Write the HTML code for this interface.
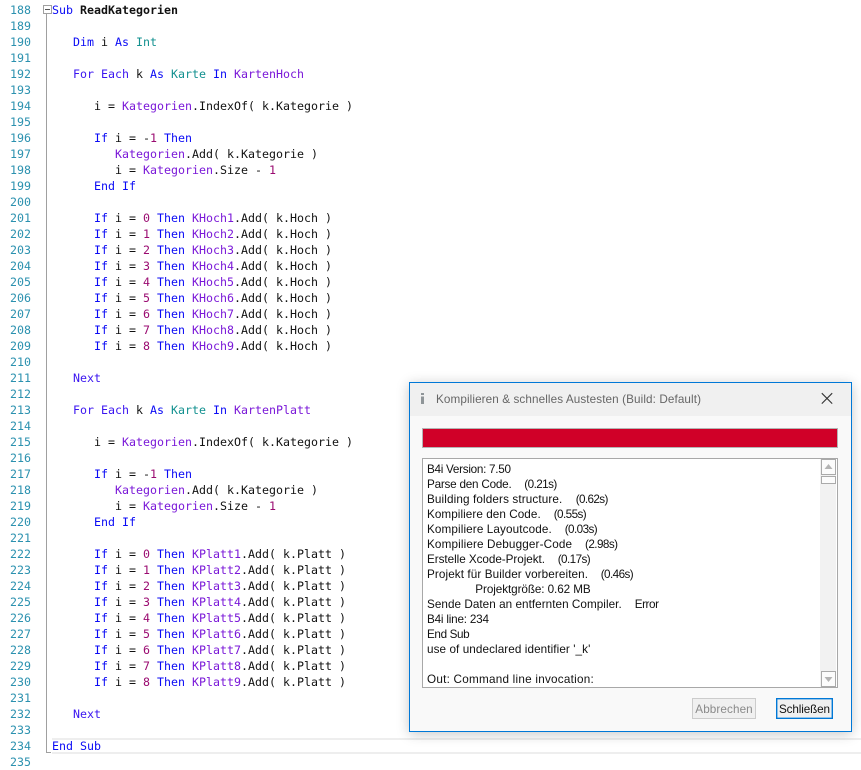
<!DOCTYPE html>
<html><head><meta charset="utf-8"><style>
html,body{margin:0;padding:0;background:#fff}
#p{position:relative;width:861px;height:770px;overflow:hidden;background:#fff}
pre{margin:0;position:absolute;font-family:"DejaVu Sans Mono","Liberation Mono",monospace;font-size:11.63px;line-height:16px}
#n{left:0;top:2px;width:31px;text-align:right;color:#2b91af}
#c{left:52px;top:2px;color:#111}
.k{color:#0a0af5}.f{color:#3a14f0}.t{color:#12908f}.v{color:#7a18d8}.d{color:#9a0a70}
.a{position:absolute}
svg text{font-family:"Liberation Sans",sans-serif;font-size:11.7px;fill:#111}
</style></head><body><div id="p">
<div class="a" style="left:52px;top:738px;width:809px;height:12px;border-top:2px solid #eee;border-bottom:2px solid #eee"></div>
<div class="a" style="left:46px;top:13px;width:1px;height:739px;background:#a0a0a0"></div>
<div class="a" style="left:46px;top:752px;width:5px;height:1px;background:#a0a0a0"></div>
<div class="a" style="left:43px;top:5px;width:7px;height:7px;border:1px solid #a0a0a0;background:#fff"></div>
<div class="a" style="left:45px;top:9px;width:5px;height:1px;background:#555"></div>
<pre id="n">188
189
190
191
192
193
194
195
196
197
198
199
200
201
202
203
204
205
206
207
208
209
210
211
212
213
214
215
216
217
218
219
220
221
222
223
224
225
226
227
228
229
230
231
232
233
234
235</pre>
<pre id="c"><span class="k">Sub</span> <b>ReadKategorien</b>

   <span class="k">Dim</span> i <span class="k">As</span> <span class="t">Int</span>

   <span class="f">For Each</span> k <span class="k">As</span> <span class="t">Karte</span> <span class="k">In</span> <span class="v">KartenHoch</span>

      i = <span class="v">Kategorien</span>.IndexOf( k.Kategorie )

      <span class="k">If</span> i = -<span class="d">1</span> <span class="k">Then</span>
         <span class="v">Kategorien</span>.Add( k.Kategorie )
         i = <span class="v">Kategorien</span>.Size - <span class="d">1</span>
      <span class="k">End If</span>

      <span class="k">If</span> i = <span class="d">0</span> <span class="k">Then</span> <span class="v">KHoch1</span>.Add( k.Hoch )
      <span class="k">If</span> i = <span class="d">1</span> <span class="k">Then</span> <span class="v">KHoch2</span>.Add( k.Hoch )
      <span class="k">If</span> i = <span class="d">2</span> <span class="k">Then</span> <span class="v">KHoch3</span>.Add( k.Hoch )
      <span class="k">If</span> i = <span class="d">3</span> <span class="k">Then</span> <span class="v">KHoch4</span>.Add( k.Hoch )
      <span class="k">If</span> i = <span class="d">4</span> <span class="k">Then</span> <span class="v">KHoch5</span>.Add( k.Hoch )
      <span class="k">If</span> i = <span class="d">5</span> <span class="k">Then</span> <span class="v">KHoch6</span>.Add( k.Hoch )
      <span class="k">If</span> i = <span class="d">6</span> <span class="k">Then</span> <span class="v">KHoch7</span>.Add( k.Hoch )
      <span class="k">If</span> i = <span class="d">7</span> <span class="k">Then</span> <span class="v">KHoch8</span>.Add( k.Hoch )
      <span class="k">If</span> i = <span class="d">8</span> <span class="k">Then</span> <span class="v">KHoch9</span>.Add( k.Hoch )

   <span class="f">Next</span>

   <span class="f">For Each</span> k <span class="k">As</span> <span class="t">Karte</span> <span class="k">In</span> <span class="v">KartenPlatt</span>

      i = <span class="v">Kategorien</span>.IndexOf( k.Kategorie )

      <span class="k">If</span> i = -<span class="d">1</span> <span class="k">Then</span>
         <span class="v">Kategorien</span>.Add( k.Kategorie )
         i = <span class="v">Kategorien</span>.Size - <span class="d">1</span>
      <span class="k">End If</span>

      <span class="k">If</span> i = <span class="d">0</span> <span class="k">Then</span> <span class="v">KPlatt1</span>.Add( k.Platt )
      <span class="k">If</span> i = <span class="d">1</span> <span class="k">Then</span> <span class="v">KPlatt2</span>.Add( k.Platt )
      <span class="k">If</span> i = <span class="d">2</span> <span class="k">Then</span> <span class="v">KPlatt3</span>.Add( k.Platt )
      <span class="k">If</span> i = <span class="d">3</span> <span class="k">Then</span> <span class="v">KPlatt4</span>.Add( k.Platt )
      <span class="k">If</span> i = <span class="d">4</span> <span class="k">Then</span> <span class="v">KPlatt5</span>.Add( k.Platt )
      <span class="k">If</span> i = <span class="d">5</span> <span class="k">Then</span> <span class="v">KPlatt6</span>.Add( k.Platt )
      <span class="k">If</span> i = <span class="d">6</span> <span class="k">Then</span> <span class="v">KPlatt7</span>.Add( k.Platt )
      <span class="k">If</span> i = <span class="d">7</span> <span class="k">Then</span> <span class="v">KPlatt8</span>.Add( k.Platt )
      <span class="k">If</span> i = <span class="d">8</span> <span class="k">Then</span> <span class="v">KPlatt9</span>.Add( k.Platt )

   <span class="f">Next</span>

<span class="k">End Sub</span></pre>

<div class="a" style="left:409px;top:382px;width:441px;height:348px;border:1px solid #0078d7;background:#f9f9f9;box-shadow:0 2px 12px rgba(0,0,0,.22)"></div>
<div class="a" style="left:410px;top:383px;width:441px;height:33px;background:#f0f0f0"></div>
<div class="a" style="left:422px;top:428px;width:414px;height:18px;border:1px solid #b4b4b4;background:#d00028"></div>
<div class="a" style="left:422px;top:458px;width:414px;height:228px;border:1px solid #a8a8a8;background:#fff"></div>
<div class="a" style="left:820px;top:459px;width:16px;height:228px;background:#f2f2f2"></div>
<div class="a" style="left:692px;top:698px;width:62px;height:19px;border:1px solid #ccc;background:#f0f0f0"></div>
<div class="a" style="left:776px;top:698px;width:55px;height:19px;border:1px solid #0078d7;box-shadow:inset 0 0 0 .4px #0078d7;background:#f0f0f0"></div>

<svg class="a" style="left:0;top:0" width="861" height="770" viewBox="0 0 861 770">
<rect x="421" y="393" width="3" height="2" fill="#8f9598"/>
<rect x="421" y="396.5" width="3" height="7.5" fill="#8f9598"/>
<path d="M821.8 393.2L832.2 403.6M832.2 393.2L821.8 403.6" stroke="#333" stroke-width="1.1" fill="none"/>
<rect x="821.5" y="459.5" width="14" height="15" fill="#fcfcfc" stroke="#aaa"/>
<path d="M824.5 469L828.5 464L832.5 469Z" fill="#b4b4b4"/>
<rect x="821.5" y="476.5" width="14" height="7" fill="#fcfcfc" stroke="#aaa"/>
<rect x="821.5" y="671.5" width="14" height="15" fill="#fcfcfc" stroke="#aaa"/>
<path d="M824.5 677L828.5 682L832.5 677Z" fill="#b4b4b4"/>

<text x="436" y="403" textLength="265" style="fill:#666">Kompilieren &amp; schnelles Austesten (Build: Default)</text>

<text x="427" y="473" textLength="84">B4i Version: 7.50</text>
<text x="427" y="488" textLength="84.7">Parse den Code.</text><text x="524.3" y="488" textLength="33">(0.21s)</text>
<text x="427" y="503" textLength="135.3">Building folders structure.</text><text x="575.7" y="503" textLength="32.7">(0.62s)</text>
<text x="427" y="518" textLength="113.7">Kompiliere den Code.</text><text x="553.7" y="518" textLength="33">(0.55s)</text>
<text x="427" y="533" textLength="124.7">Kompiliere Layoutcode.</text><text x="564.7" y="533" textLength="33">(0.03s)</text>
<text x="427" y="548" textLength="145">Kompiliere Debugger-Code</text><text x="585" y="548" textLength="33">(2.98s)</text>
<text x="427" y="563" textLength="118">Erstelle Xcode-Projekt.</text><text x="557.7" y="563" textLength="33">(0.17s)</text>
<text x="427" y="578" textLength="161">Projekt für Builder vorbereiten.</text><text x="600.7" y="578" textLength="33">(0.46s)</text>
<text x="475.3" y="593" textLength="115.4">Projektgröße: 0.62 MB</text>
<text x="427" y="608" textLength="194.7">Sende Daten an entfernten Compiler.</text><text x="634.7" y="608" textLength="24.3">Error</text>
<text x="427" y="623" textLength="62">B4i line: 234</text>
<text x="427" y="638" textLength="42.7">End Sub</text>
<text x="427" y="653" textLength="163.3">use of undeclared identifier '_k'</text>
<text x="427" y="683" textLength="166.7">Out: Command line invocation:</text>

<text x="695.3" y="713" textLength="57.4" style="fill:#8a8a8a">Abbrechen</text>
<text x="779" y="713" textLength="51">Schließen</text>
</svg>
</div></body></html>
